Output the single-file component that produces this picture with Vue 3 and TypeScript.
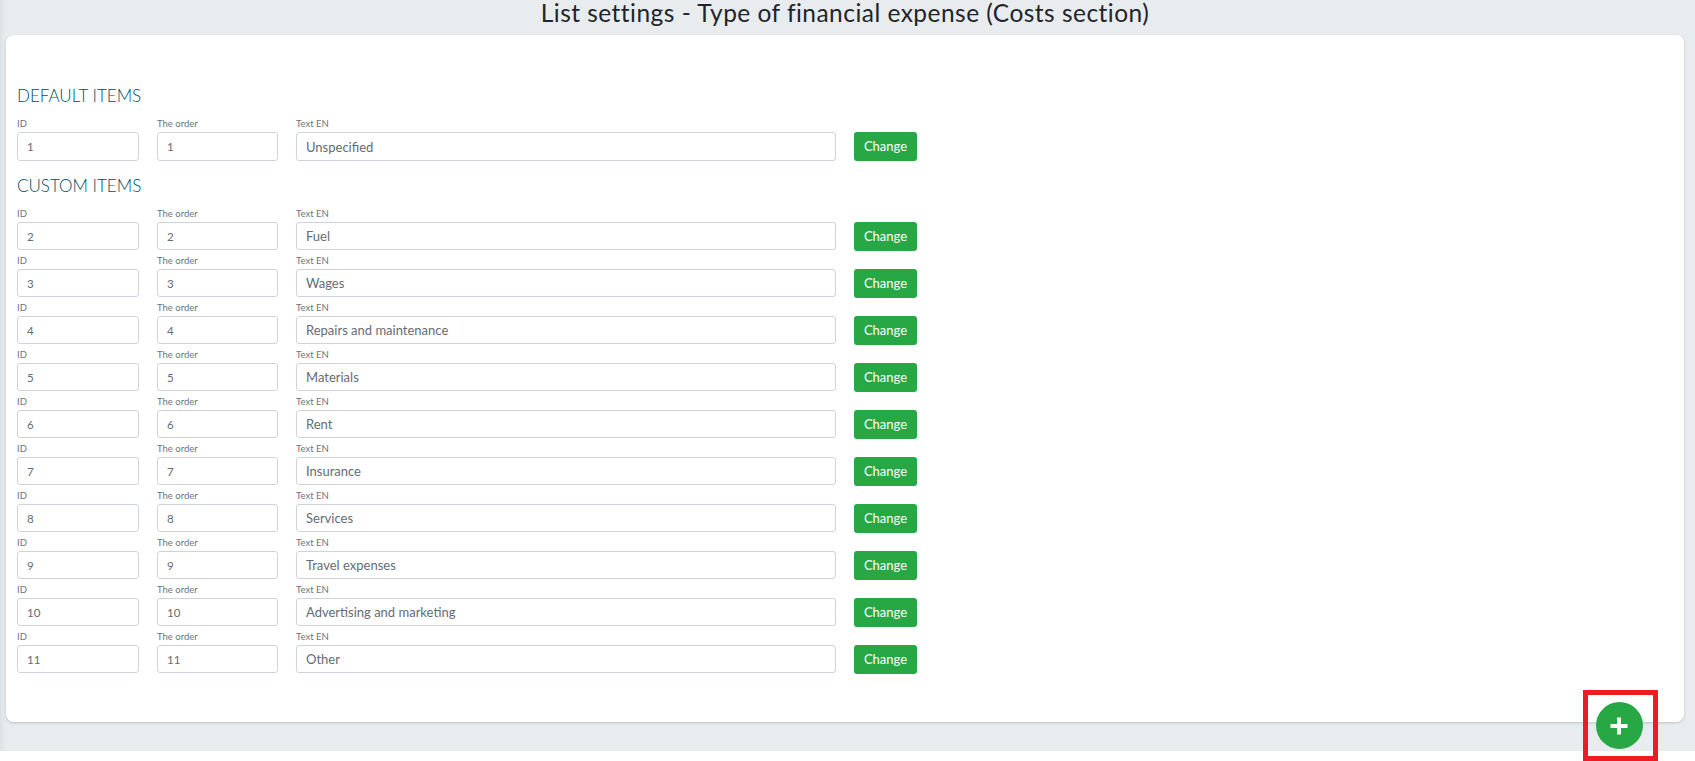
<script setup lang="ts">
interface Item { id: number; text: string }
const defaults: Item[] = [{ id: 1, text: 'Unspecified' }]
const customs: Item[] = [
  { id: 2, text: 'Fuel' },
  { id: 3, text: 'Wages' },
  { id: 4, text: 'Repairs and maintenance' },
  { id: 5, text: 'Materials' },
  { id: 6, text: 'Rent' },
  { id: 7, text: 'Insurance' },
  { id: 8, text: 'Services' },
  { id: 9, text: 'Travel expenses' },
  { id: 10, text: 'Advertising and marketing' },
  { id: 11, text: 'Other' },
]
const sections = [
  { title: 'DEFAULT ITEMS', items: defaults },
  { title: 'CUSTOM ITEMS', items: customs },
]
</script>

<template>
  <div class="shot">
    <div class="page">
      <h1 class="title">List settings - Type of financial expense (Costs section)</h1>
      <main class="card">
        <section v-for="s in sections" :key="s.title" class="section">
          <h2 class="heading">{{ s.title }}</h2>
          <div v-for="item in s.items" :key="item.id" class="row">
            <label class="field id-col">
              <span class="label">ID</span>
              <input class="input num" :value="item.id" />
            </label>
            <label class="field order-col">
              <span class="label">The order</span>
              <input class="input num" :value="item.id" />
            </label>
            <label class="field wide">
              <span class="label">Text EN</span>
              <input class="input text" :value="item.text" />
            </label>
            <button class="btn" type="button">Change</button>
          </div>
        </section>
      </main>
    </div>
    <div class="highlight">
      <button class="fab" type="button" aria-label="Add">
        <svg width="18" height="18" viewBox="0 0 18 18"><path d="M9 .5v17M.5 9h17" stroke="#fff" stroke-width="4" fill="none" /></svg>
      </button>
    </div>
  </div>
</template>

<style>
html, body { margin: 0; background: #fff; }
</style>

<style scoped>
.shot {
  position: relative;
  height: 761px;
  overflow: hidden;
  font-family: Lato, "Open Sans", sans-serif;
}
.page {
  height: 751px;
  background: #e9ecef;
  box-shadow: inset 5px 0 5px -3px rgba(0, 0, 0, 0.06);
}
.title {
  margin: 0;
  height: 35px;
  padding-right: 5px;
  line-height: 26px;
  text-align: center;
  font-size: 24.5px;
  font-weight: 400;
  color: #212529;
  letter-spacing: 0.47px;
}
.card {
  box-sizing: border-box;
  height: 687px;
  margin: 0 11px 0 6px;
  padding: 49px 11px 0;
  background: #fff;
  border-radius: 8px;
  box-shadow: 0 1px 3px rgba(0, 0, 0, 0.18);
}
.section + .section { margin-top: 13px; }
.heading {
  margin: 0 0 6px;
  height: 24px;
  line-height: 24px;
  font-size: 17px;
  font-weight: 300;
  color: #004f5c;
}
.row {
  display: flex;
  align-items: flex-end;
  gap: 18px;
  height: 47px;
}
.field { display: flex; flex-direction: column; }
.id-col { width: 122px; }
.order-col { width: 121px; }
.wide { width: 540px; }
.section + .section .field { padding-bottom: 1px; }
.label {
  margin-bottom: 2.5px;
  font-size: 9.5px;
  line-height: 12px;
  color: #6c757d;
}
.input {
  box-sizing: border-box;
  width: 100%;
  height: 29px;
  padding: 0 9px;
  border: 1px solid #ced4da;
  border-radius: 3px;
  background: #fff;
  font: 13px Lato, "Open Sans", sans-serif;
  color: #646c74;
  outline: none;
}
.section + .section .input { height: 28px; }
.input.text { padding: 0 9px; }
.input.num { font-size: 11.5px; }
.btn {
  box-sizing: border-box;
  width: 63px;
  height: 29px;
  border: 0;
  border-radius: 3px;
  background: #28a745;
  color: #fff;
  font: 13px Lato, "Open Sans", sans-serif;
  padding: 0 0 1px;
}
.highlight {
  position: absolute;
  box-sizing: border-box;
  left: 1583px;
  top: 690px;
  width: 75px;
  height: 71px;
  border: 5px solid #ed1c24;
  display: flex;
  align-items: center;
  justify-content: center;
}
.fab {
  display: flex;
  align-items: center;
  justify-content: center;
  width: 47px;
  height: 47px;
  margin-right: 3px;
  padding: 0;
  border: 0;
  border-radius: 50%;
  background: #28a745;
}
</style>
